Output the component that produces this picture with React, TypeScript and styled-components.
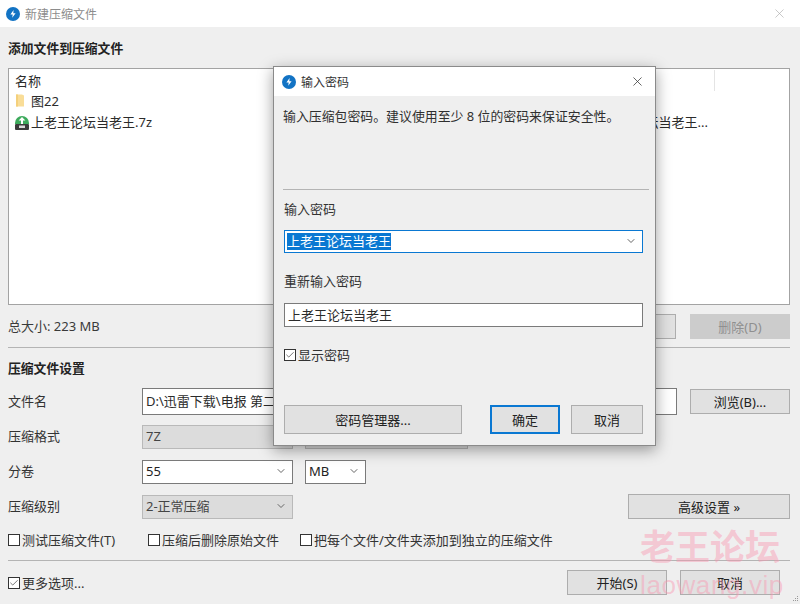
import { createGlobalStyle } from 'styled-components';
import styled from 'styled-components';
import { Check, ChevronDown, X } from 'lucide-react';

const GlobalStyle = createGlobalStyle`
  html, body {
    margin: 0;
    padding: 0;
    background: #efefef;
  }
  * {
    box-sizing: border-box;
  }
`;

const Window = styled.div`
  position: relative;
  width: 800px;
  height: 604px;
  overflow: hidden;
  background: #efefef;
  color: #2b2b2b;
  font-family: "Noto Sans", "Noto Sans CJK SC", sans-serif;
  font-size: 13px;
`;

const TitleBar = styled.div<{ $height: number }>`
  display: flex;
  align-items: center;
  height: ${(p) => p.$height}px;
  background: #fff;
`;

const MainTitleBar = styled(TitleBar)`
  padding: 0 13px 0 6px;
  gap: 5px;
  color: #8c8c8c;
  font-size: 12px;
`;

const CloseSlot = styled.div<{ $color: string }>`
  display: flex;
  margin-left: auto;
  color: ${(p) => p.$color};
`;

const Body = styled.div`
  display: flex;
  flex-direction: column;
  padding: 0 10px 0 8px;
`;

const SectionTitle = styled.div<{ $height: number; $top?: number }>`
  display: flex;
  align-items: center;
  height: ${(p) => p.$height}px;
  padding-top: ${(p) => p.$top ?? 0}px;
  font-weight: 700;
  font-size: 12.8px;
  color: #222;
`;

const FileList = styled.div`
  display: flex;
  flex-direction: column;
  height: 237px;
  padding-left: 5px;
  background: #fff;
  border: 1px solid #a3a3a3;
`;

const ListHeader = styled.div`
  display: flex;
  align-items: center;
  height: 21px;
  padding: 1px 0 0 1px;
`;

const HeaderDivider = styled.div`
  width: 1px;
  height: 21px;
  margin-left: 459px;
  background: #e4e4e4;
`;

const ListRow = styled.div`
  display: flex;
  align-items: center;
  gap: 1px;
  height: 21px;
  white-space: nowrap;
`;

const NameCell = styled.div`
  width: 240px;
`;

const IconSlot = styled.div`
  display: flex;
  width: 16px;
`;

const FolderLabel = styled.span`
  padding-bottom: 1px;
`;

const PathCell = styled.div`
  width: 436px;
  text-align: right;
`;

const SummaryRow = styled.div`
  display: flex;
  align-items: center;
  gap: 14px;
  height: 42px;
  color: #3a3a3a;
`;

const Summary = styled.div`
  margin-right: auto;
  padding-bottom: 2px;
`;

const Button = styled.div<{ $width: number; $height?: number; $disabled?: boolean; $primary?: boolean }>`
  display: flex;
  align-items: center;
  justify-content: center;
  flex-shrink: 0;
  width: ${(p) => p.$width}px;
  height: ${(p) => p.$height ?? 25}px;
  background: ${(p) => (p.$disabled ? '#cccccc' : '#e1e1e1')};
  border: ${(p) => (p.$primary ? '2px solid #0a78d2' : p.$disabled ? '1px solid #cccccc' : '1px solid #adadad')};
  color: ${(p) => (p.$disabled ? '#8f8f8f' : '#222')};
`;

const Separator = styled.div`
  height: 1px;
  background: #b4b4b4;
`;

const FormRow = styled.div`
  display: flex;
  align-items: center;
  height: 35px;
`;

const FieldLabel = styled.div`
  width: 134px;
  flex-shrink: 0;
  padding-bottom: 2px;
  color: #333;
`;

const TextBox = styled.div<{ $width: number; $height: number }>`
  display: flex;
  align-items: center;
  width: ${(p) => p.$width}px;
  height: ${(p) => p.$height}px;
  padding: 0 0 2px 3px;
  background: #fff;
  border: 1px solid #7a7a7a;
  white-space: nowrap;
  overflow: hidden;
`;

const Select = styled.div<{ $width: number; $disabled?: boolean }>`
  display: flex;
  align-items: center;
  justify-content: space-between;
  width: ${(p) => p.$width}px;
  height: 24px;
  margin-right: 12px;
  padding: 0 5px 2px 3px;
  background: ${(p) => (p.$disabled ? '#dcdcdc' : '#fff')};
  border: 1px solid ${(p) => (p.$disabled ? '#b9b9b9' : '#7a7a7a')};
  color: ${(p) => (p.$disabled ? '#444' : '#222')};
  flex-shrink: 0;
`;

const Chevron = styled(ChevronDown)`
  width: 12px;
  height: 12px;
  color: #666;
`;

const SpacedButton = styled(Button)`
  margin-left: auto;
`;

const OptionRow = styled.div`
  display: flex;
  align-items: center;
  height: 32px;
  margin-bottom: 4px;
  padding-bottom: 1px;
`;

const CheckItem = styled.div<{ $width?: number }>`
  display: flex;
  align-items: center;
  gap: 2px;
  ${(p) => (p.$width ? `width: ${p.$width}px;` : '')}
  color: #333;
  white-space: nowrap;
`;

const Box = styled.div`
  display: flex;
  align-items: center;
  justify-content: center;
  width: 12px;
  height: 12px;
  margin-top: 1px;
  background: #fff;
  border: 1px solid #333;
  color: #333;
`;

const Footer = styled.div`
  display: flex;
  align-items: center;
  gap: 13px;
  height: 43px;
  padding-right: 10px;
`;

const FooterCheck = styled.div`
  margin-right: auto;
`;

const Dialog = styled.div`
  position: absolute;
  left: 273px;
  top: 66px;
  width: 383px;
  height: 380px;
  background: #efefef;
  border: 1px solid #8a8a8a;
  box-shadow: 0 4px 14px rgba(0, 0, 0, 0.38);
`;

const DialogTitleBar = styled(TitleBar)`
  padding: 0 10px 0 8px;
  gap: 5px;
  font-size: 12px;
  color: #333;
`;

const Description = styled.div`
  height: 93px;
  padding: 10px 0 0 9px;
  line-height: 20px;
  font-size: 12.9px;
  color: #2f2f2f;
  white-space: pre;
`;

const DialogSeparator = styled(Separator)`
  margin: 0 6px 0 9px;
`;

const DialogLabel = styled.div<{ $height: number; $bottom: number }>`
  display: flex;
  align-items: flex-end;
  height: ${(p) => p.$height}px;
  padding: 0 0 ${(p) => p.$bottom}px 10px;
  color: #333;
`;

const DialogField = styled.div`
  padding-left: 10px;
`;

const Combo = styled(TextBox)`
  justify-content: space-between;
  padding: 0 5px 1px 2px;
  border: 1px solid #0a78d2;
`;

const Selected = styled.span`
  background: #0a78d2;
  color: #fff;
  line-height: 17px;
`;

const DialogCheck = styled(CheckItem)`
  height: 20px;
  margin: 17px 0 41px 10px;
`;

const DialogActions = styled.div`
  display: flex;
  padding-left: 10px;
`;

const ManagerButton = styled(Button)`
  margin-right: 28px;
`;

const OkButton = styled(Button)`
  margin-right: 11px;
`;

const Watermark = styled.div`
  position: absolute;
  left: 640px;
  top: 524px;
  pointer-events: none;
  color: rgba(250, 150, 175, 0.45);
  white-space: nowrap;
`;

const WatermarkTitle = styled.div`
  font-size: 35px;
  font-weight: 700;
  line-height: 46px;
`;

const WatermarkUrl = styled.div`
  font-family: "Liberation Sans", sans-serif;
  font-size: 26px;
  line-height: 30px;
  letter-spacing: 0.6px;
`;

const Grip = styled.svg`
  position: absolute;
  right: 1px;
  bottom: 1px;
`;

const Logo = ({ size }: { size: number }) => (
  <svg width={size} height={size} viewBox="0 0 14 14">
    <circle cx="7" cy="7" r="7" fill="#1273c4" />
    <path d="M7.6 3 L4.4 7.6 H6.7 L6.2 10.8 L9.6 6.2 H7.3 Z" fill="#fff" />
  </svg>
);

const FolderIcon = () => (
  <svg width="11" height="13" viewBox="0 0 11 13">
    <path d="M2 0.5 H8 L10 1.5 V12.5 H2 Z" fill="#f9dd98" />
    <rect x="2" y="0.5" width="2" height="12" fill="#f4d07c" />
  </svg>
);

const ArchiveIcon = () => (
  <svg width="16" height="16" viewBox="0 0 16 16">
    <path d="M1 9 A7 7 0 0 1 15 9 V10 H1 Z" fill="#3daa5c" />
    <path d="M8 3 L11.4 6.6 H9 V10 H7 V6.6 H4.6 Z" fill="#fff" />
    <rect x="1" y="10" width="14" height="6" rx="1" fill="#3b3b3b" />
    <rect x="5" y="11.5" width="6" height="2.5" fill="#d9d9d9" />
  </svg>
);

const CheckBox = ({ checked }: { checked?: boolean }) => (
  <Box>{checked && <Check size={10} strokeWidth={1.6} />}</Box>
);

export default function App() {
  return (
    <Window>
      <GlobalStyle />
      <MainTitleBar $height={27}>
        <Logo size={14} />
        <span>新建压缩文件</span>
        <CloseSlot $color="#a8a8a8">
          <X size={15} strokeWidth={1} />
        </CloseSlot>
      </MainTitleBar>
      <Body>
        <SectionTitle $height={41}>添加文件到压缩文件</SectionTitle>
        <FileList>
          <ListHeader>
            <NameCell>名称</NameCell>
            <HeaderDivider />
          </ListHeader>
          <ListRow>
            <IconSlot>
              <FolderIcon />
            </IconSlot>
            <FolderLabel>图22</FolderLabel>
          </ListRow>
          <ListRow>
            <IconSlot>
              <ArchiveIcon />
            </IconSlot>
            <NameCell>上老王论坛当老王.7z</NameCell>
            <PathCell>上老王论坛当老王...</PathCell>
          </ListRow>
        </FileList>
        <SummaryRow>
          <Summary>总大小: 223 MB</Summary>
          <Button $width={100}>添加(A)</Button>
          <Button $width={100} $disabled>
            删除(D)
          </Button>
        </SummaryRow>
        <Separator />
        <SectionTitle $height={36} $top={3}>
          压缩文件设置
        </SectionTitle>
        <FormRow>
          <FieldLabel>文件名</FieldLabel>
          <TextBox $width={535} $height={27}>
            D:\迅雷下载\电报 第二季\上老王论坛当老王.7z
          </TextBox>
          <SpacedButton $width={100}>浏览(B)...</SpacedButton>
        </FormRow>
        <FormRow>
          <FieldLabel>压缩格式</FieldLabel>
          <Select $width={151} $disabled>
            7Z
          </Select>
          <Select $width={163} $disabled>
            AES-256
          </Select>
        </FormRow>
        <FormRow>
          <FieldLabel>分卷</FieldLabel>
          <Select $width={151}>
            55
            <Chevron />
          </Select>
          <Select $width={61}>
            MB
            <Chevron />
          </Select>
        </FormRow>
        <FormRow>
          <FieldLabel>压缩级别</FieldLabel>
          <Select $width={151} $disabled>
            2-正常压缩
            <Chevron />
          </Select>
          <SpacedButton $width={162}>高级设置 »</SpacedButton>
        </FormRow>
        <OptionRow>
          <CheckItem $width={140}>
            <CheckBox />
            测试压缩文件(T)
          </CheckItem>
          <CheckItem $width={152}>
            <CheckBox />
            压缩后删除原始文件
          </CheckItem>
          <CheckItem>
            <CheckBox />
            把每个文件/文件夹添加到独立的压缩文件
          </CheckItem>
        </OptionRow>
        <Separator />
        <Footer>
          <FooterCheck>
            <CheckItem>
              <CheckBox checked />
              更多选项...
            </CheckItem>
          </FooterCheck>
          <Button $width={100}>开始(S)</Button>
          <Button $width={100}>取消</Button>
        </Footer>
      </Body>

      <Dialog>
        <DialogTitleBar $height={29}>
          <Logo size={14} />
          <span>输入密码</span>
          <CloseSlot $color="#333">
            <X size={15} strokeWidth={1.2} />
          </CloseSlot>
        </DialogTitleBar>
        <Description>输入压缩包密码。建议使用至少 8 位的密码来保证安全性。</Description>
        <DialogSeparator />
        <DialogLabel $height={40} $bottom={12}>
          输入密码
        </DialogLabel>
        <DialogField>
          <Combo $width={359} $height={23}>
            <Selected>上老王论坛当老王</Selected>
            <Chevron />
          </Combo>
        </DialogField>
        <DialogLabel $height={50} $bottom={13}>
          重新输入密码
        </DialogLabel>
        <DialogField>
          <TextBox $width={359} $height={24}>
            上老王论坛当老王
          </TextBox>
        </DialogField>
        <DialogCheck>
          <CheckBox checked />
          显示密码
        </DialogCheck>
        <DialogActions>
          <ManagerButton $width={178} $height={29}>
            密码管理器...
          </ManagerButton>
          <OkButton $width={70} $height={29} $primary>
            确定
          </OkButton>
          <Button $width={72} $height={29}>
            取消
          </Button>
        </DialogActions>
      </Dialog>

      <Watermark>
        <WatermarkTitle>老王论坛</WatermarkTitle>
        <WatermarkUrl>laowang.vip</WatermarkUrl>
      </Watermark>
      <Grip width="8" height="8" viewBox="0 0 8 8">
        <rect x="6" y="1" width="1" height="1" fill="#999" />
        <rect x="4" y="3" width="1" height="1" fill="#999" />
        <rect x="6" y="3" width="1" height="1" fill="#999" />
        <rect x="2" y="5" width="1" height="1" fill="#999" />
        <rect x="4" y="5" width="1" height="1" fill="#999" />
        <rect x="6" y="5" width="1" height="1" fill="#999" />
      </Grip>
    </Window>
  );
}
